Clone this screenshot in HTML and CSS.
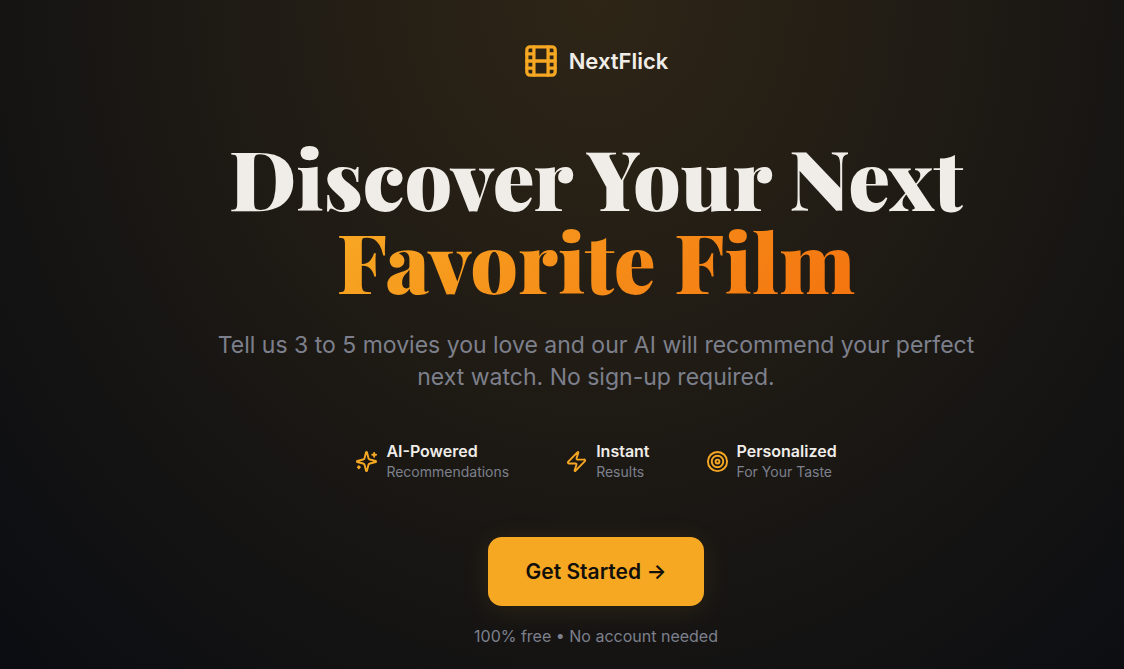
FILE: index.html
```html
<!DOCTYPE html>
<html lang="en">
<head>
<meta charset="utf-8">
<meta name="viewport" content="width=device-width, initial-scale=1">
<title>NextFlick</title>
<link rel="stylesheet" href="styles.css">
</head>
<body>
<main class="hero">
  <header class="brand">
    <svg class="icon brand-icon" viewBox="0 0 24 24" aria-hidden="true"><rect width="20" height="20" x="2" y="2" rx="2.2"/><path d="M7 2v20M17 2v20M2 12h20M2 7h5M2 17h5M17 17h5M17 7h5"/></svg>
    <span class="brand-name">NextFlick</span>
  </header>
  <h1 class="title">Discover Your Next <span class="title-accent">Favorite Film</span></h1>
  <p class="lead">Tell us 3 to 5 movies you love and our AI will recommend your perfect next watch. No sign-up required.</p>
  <ul class="features">
    <li class="feature">
      <svg class="icon" viewBox="0 0 24 24" aria-hidden="true"><path d="M9.937 15.5A2 2 0 0 0 8.5 14.063l-6.135-1.582a.5.5 0 0 1 0-.962L8.5 9.936A2 2 0 0 0 9.937 8.5l1.582-6.135a.5.5 0 0 1 .963 0L14.063 8.5A2 2 0 0 0 15.5 9.937l6.135 1.581a.5.5 0 0 1 0 .964L15.5 14.063a2 2 0 0 0-1.437 1.437l-1.582 6.135a.5.5 0 0 1-.963 0z"/><path d="M20 3v4M22 5h-4M4 17v2M5 18H3"/></svg>
      <div><strong class="feature-name">AI-Powered</strong><span class="feature-note">Recommendations</span></div>
    </li>
    <li class="feature">
      <svg class="icon" viewBox="0 0 24 24" aria-hidden="true"><path d="M4 14a1 1 0 0 1-.78-1.63l9.9-10.2a.5.5 0 0 1 .86.46l-1.92 6.02A1 1 0 0 0 13 10h7a1 1 0 0 1 .78 1.63l-9.9 10.2a.5.5 0 0 1-.86-.46l1.92-6.02A1 1 0 0 0 11 14z"/></svg>
      <div><strong class="feature-name">Instant</strong><span class="feature-note">Results</span></div>
    </li>
    <li class="feature">
      <svg class="icon" viewBox="0 0 24 24" aria-hidden="true"><circle cx="12" cy="12" r="10"/><circle cx="12" cy="12" r="6"/><circle cx="12" cy="12" r="2"/></svg>
      <div><strong class="feature-name">Personalized</strong><span class="feature-note">For Your Taste</span></div>
    </li>
  </ul>
  <button class="cta" type="button">Get Started →</button>
  <p class="footnote">100% free • No account needed</p>
</main>
</body>
</html>
```

FILE: styles.css
```css
* { box-sizing: border-box; }

body {
  margin: 0;
  min-height: 100vh;
  background: #0b0d12;
  color: #f0ede8;
  font-family: Inter, "Liberation Sans", sans-serif;
}

.hero {
  min-height: 100vh;
  padding: 44px 0 20px 68px;
  display: flex;
  flex-direction: column;
  align-items: center;
  text-align: center;
  background: radial-gradient(ellipse 830px 920px at 596px 0, #2e2516, #0b0d12);
}

.icon {
  width: 23px;
  height: 23px;
  flex: none;
  fill: none;
  stroke: #f7a823;
  stroke-width: 2;
  stroke-linecap: round;
  stroke-linejoin: round;
}

.brand {
  display: flex;
  align-items: center;
  gap: 11px;
}

.brand-icon {
  width: 34px;
  height: 34px;
  stroke-width: 2.3;
}

.brand-name {
  font-size: 22px;
  line-height: 32px;
  font-weight: 600;
}

.title {
  max-width: 900px;
  margin: 57px 0 0;
  font-family: "Playfair Display", "Liberation Serif", serif;
  font-size: 83px;
  line-height: 83px;
  font-weight: 900;
}

.title-accent {
  display: block;
  width: fit-content;
  margin: 0 auto;
  background: linear-gradient(135deg, #f7a823, #f4740f);
  background-clip: text;
  -webkit-background-clip: text;
  color: transparent;
}

.lead {
  max-width: 768px;
  margin: 28px 0 0;
  color: #7d808c;
  font-size: 23px;
  line-height: 32px;
}

.features {
  display: flex;
  gap: 56px;
  margin: 48px 0 0;
  padding: 0;
  list-style: none;
  text-align: left;
}

.feature {
  display: flex;
  align-items: center;
  gap: 8px;
}

.feature-name,
.feature-note { display: block; }

.feature-name {
  font-size: 16px;
  line-height: 21px;
  font-weight: 600;
}

.feature-note {
  color: #7d808c;
  font-size: 14px;
  line-height: 20px;
}

.cta {
  margin-top: 55px;
  padding: 18px 38px;
  border: 0;
  border-radius: 14px;
  background: #f7a823;
  color: #120f0a;
  font: 600 21px/33px Inter, "Liberation Sans", sans-serif;
  box-shadow: 0 4px 28px rgba(249, 168, 37, 0.1);
  cursor: pointer;
}

.footnote {
  margin: 19px 0 0;
  color: #7d808c;
  font-size: 16px;
  line-height: 22px;
}
```
